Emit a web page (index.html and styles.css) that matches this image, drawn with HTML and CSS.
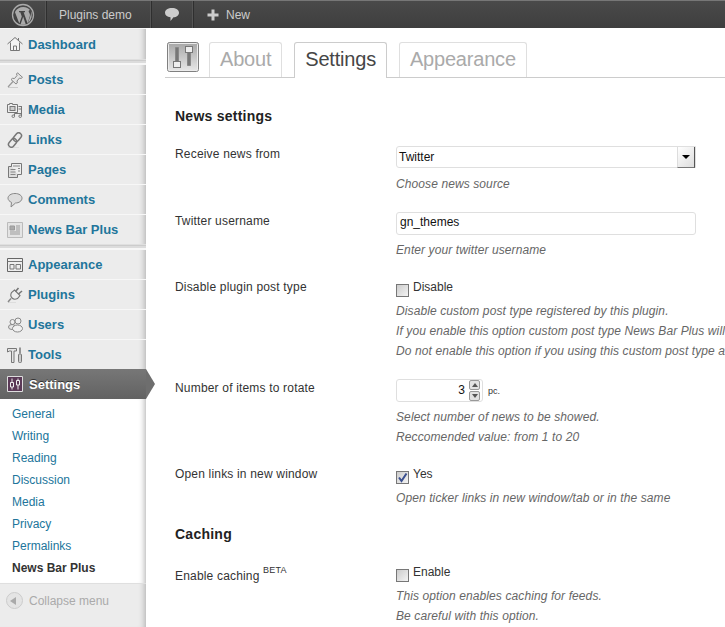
FILE: index.html
```html
<!DOCTYPE html>
<html lang="en">
<head>
  <meta charset="UTF-8">
  <title>News Bar Plus Settings</title>
  <link rel="stylesheet" href="styles.css">
</head>
<body>

  <div class="adminbar">
    <div class="bar-item bar-logo">
      <svg width="24" height="24" viewBox="0 0 24 24"><circle cx="12" cy="12" r="10.500" fill="none" stroke="#aaa" stroke-width="1.300"/><path d="M4 9.200 8.300 20.600 10.800 13.400 9.300 9.200H8V8h6v1.200h-1.400l4 11.400 2.200-7.300c.5-1.700-.2-3-1-4.300-.5-.9.200-2 1.200-2-1.700-2-4-3-6.800-3-3.400 0-6.200 1.600-7.800 4.200z" fill="#aaa"/><path d="M12.200 13.800 9.500 21.500c1.700.5 3.500.4 5.200-.2z" fill="#aaa"/><path d="M19.800 7.500c.5 2.300.2 4-.6 6l-2.300 6.500c3.400-2.200 5-7.800 2.900-12.500z" fill="#aaa"/></svg>
    </div>
    <div class="bar-item bar-site">Plugins demo</div>
    <div class="bar-item bar-comments">
      <svg width="16" height="15" viewBox="0 0 16 15"><path d="M8 1c4 0 7 1.900 7 4.700S12.500 10 9.500 10.300L6.500 14V10.200C3 9.900 1 8.300 1 5.700 1 2.900 4 1 8 1z" fill="#ccc"/></svg>
    </div>
    <div class="bar-item bar-new">
      <svg width="12" height="12" viewBox="0 0 12 12"><path d="M4.500 0.500h3v4h4v3h-4v4h-3v-4h-4v-3h4z" fill="#ccc"/></svg>
      <span>New</span>
    </div>
  </div>

  <div class="wrap">
    <div class="sidebar">
      <ul class="menu">
        <li class="menu-item first">
          <svg class="mi" viewBox="0 0 16 16"><path d="M3.500 7v7.500h9V7L8 2.500z" fill="#f4f4f4"/><path d="M.5 8 8 1.500 15.500 8M3.500 6.500v8h9v-8M6.500 14.500v-4.500h3v4.500M11.500 2v2.500" fill="none" stroke="#777"/></svg>
          <a>Dashboard</a>
        </li>
        <li class="menu-sep"></li>
        <li class="menu-item">
          <svg class="mi" viewBox="0 0 16 16"><path d="M1 15.500h10" stroke="#ccc"/><path d="M6 9.500 1 15" stroke="#999" stroke-width="1.200"/><path d="M10.500 .8 15.500 5.300 14 6.500 12.500 6 10 9 10.300 11 9 12 4 7.500 5.500 6.300 7.500 6.500 10 3.500 9.500 2z" fill="#e6e6e6" stroke="#888"/></svg>
          <a>Posts</a>
        </li>
        <li class="menu-item">
          <svg class="mi" viewBox="0 0 16 16"><path d="M.5 2.500h2v-1h3v1h5v8H.5z" fill="#eee" stroke="#777"/><rect x="3" y="4.500" width="5" height="4" fill="#ccc" stroke="#777"/><path d="M11.500 4.500h3.500M11.500 7h3.500M7.500 11.500v2.500M14.500 5v9M7.500 11.500h7" fill="none" stroke="#777"/><circle cx="6.300" cy="14.200" r="1.300" fill="none" stroke="#777"/><circle cx="13.200" cy="14.200" r="1.300" fill="none" stroke="#777"/></svg>
          <a>Media</a>
        </li>
        <li class="menu-item">
          <svg class="mi" viewBox="0 0 16 16"><path d="M1 15.500h11" stroke="#ddd"/><g transform="rotate(-50 8 8)" fill="none" stroke="#777" stroke-width="1.500"><rect x="-.5" y="5.200" width="9.500" height="5.600" rx="2.800"/><rect x="7" y="5.200" width="9.500" height="5.600" rx="2.800"/></g></svg>
          <a>Links</a>
        </li>
        <li class="menu-item">
          <svg class="mi" viewBox="0 0 16 16"><path d="M1.500 4.500h9v11h-9z" fill="#ddd" stroke="#777"/><path d="M4.500 4V1.500h10v11h-4" fill="#eee" stroke="#777"/><path d="M6 4h7M11 6.500h2M11 9h2M3.500 7.500h5M3.500 10h5M3.500 12.500h5" stroke="#888"/></svg>
          <a>Pages</a>
        </li>
        <li class="menu-item">
          <svg class="mi" viewBox="0 0 16 16"><path d="M8 1.500c4 0 7 2 7 4.700s-3 4.800-6.500 4.800L4 15l.5-4.600C2.500 9.500 1 8 1 6.200 1 3.500 4 1.500 8 1.500z" fill="#ddd" stroke="#888"/></svg>
          <a>Comments</a>
        </li>
        <li class="menu-item">
          <svg class="mi" viewBox="0 0 16 16"><path d="M.5.500h15v15H.5z" fill="#e4e4e4" stroke="#bbb"/><path d="M3 4h4.500v4H3zM9 4h4M9 6h4M9 8h4M3 10h10M3 12h10" fill="#aaa" stroke="#999"/></svg>
          <a>News Bar Plus</a>
        </li>
        <li class="menu-sep"></li>
        <li class="menu-item">
          <svg class="mi" viewBox="0 0 16 16"><path d="M.5 1.500h15v13H.5z" fill="#eee" stroke="#666"/><path d="M.5 4.500h15M3 7.500h4v4.500H3zM9 7.500h4.500v4.500H9z" fill="none" stroke="#777"/></svg>
          <a>Appearance</a>
        </li>
        <li class="menu-item">
          <svg class="mi" viewBox="0 0 16 16"><path d="M1 15.500h8" stroke="#ddd"/><path d="M4 11.500 1 15" stroke="#888" stroke-width="1.500"/><path d="M7.500 3 13 8.500 10.500 11.500C8.500 12.500 6.500 12.500 5 11 3.500 9.500 3.500 7.500 4.500 5.500z" fill="#eee" stroke="#777" stroke-width="1.100"/><path d="M8.500 4.500 11.500 1M11.500 7 15 4" fill="none" stroke="#777" stroke-width="1.600"/></svg>
          <a>Plugins</a>
        </li>
        <li class="menu-item">
          <svg class="mi" viewBox="0 0 16 16"><circle cx="5.500" cy="5" r="2.500" fill="#eee" stroke="#888"/><circle cx="11" cy="4" r="3" fill="#eee" stroke="#888"/><ellipse cx="5" cy="10" rx="3.500" ry="2.500" fill="#e6e6e6" stroke="#888"/><ellipse cx="10.500" cy="11.500" rx="5" ry="3.500" fill="#f0f0f0" stroke="#888"/></svg>
          <a>Users</a>
        </li>
        <li class="menu-item">
          <svg class="mi" viewBox="0 0 16 16"><path d="M.5 1.500h9v2.500H7v11.500H4.500V4H2.500L.5 5z" fill="#e4e4e4" stroke="#777"/><path d="M13 .5v6" stroke="#777" stroke-width="1.500"/><rect x="11.500" y="7" width="3" height="8.500" rx="1" fill="#ccc" stroke="#777"/></svg>
          <a>Tools</a>
        </li>
        <li class="menu-item current">
          <svg class="mi" viewBox="0 0 16 16"><path d="M.5.500h15v15H.5z" fill="#5b3a57" stroke="#ddd"/><path d="M5 2.500v4M5 11v2.500M11 2.500v2M11 9v4.500" stroke="#eee"/><path d="M3.500 6.500h3V11h-3zM9.500 4.500h3V9h-3z" fill="none" stroke="#eee"/></svg>
          <a>Settings</a>
        </li>
      </ul>
      <ul class="submenu">
        <li>General</li>
        <li>Writing</li>
        <li>Reading</li>
        <li>Discussion</li>
        <li>Media</li>
        <li>Privacy</li>
        <li>Permalinks</li>
        <li class="active">News Bar Plus</li>
      </ul>
      <div class="collapse">
        <span class="collapse-btn"><span class="collapse-arrow"></span></span>
        <span>Collapse menu</span>
      </div>
    </div>

    <div class="main">
      <div class="tabs">
        <div class="tabs-icon">
          <svg width="32" height="30" viewBox="0 0 32 30"><defs><linearGradient id="iconbg" x1="0" y1="0" x2="0" y2="1"><stop offset="0" stop-color="#a6a6a6"/><stop offset="1" stop-color="#e8e8e8"/></linearGradient></defs><rect x=".5" y=".5" width="31" height="29" rx="2" fill="url(#iconbg)" stroke="#808080"/><rect x="1.500" y="1.500" width="29" height="27" rx="1" fill="none" stroke="#ececec"/><path d="M8.500 5.500h3v14h-3zM20.500 10.500h3v13h-3z" fill="#777" stroke="#888"/><rect x="6.500" y="19.500" width="7" height="6" fill="#eee" stroke="#777"/><rect x="18.500" y="4.500" width="7" height="6" fill="#eee" stroke="#777"/></svg>
        </div>
        <a class="tab">About</a>
        <a class="tab tab-on">Settings</a>
        <a class="tab">Appearance</a>
      </div>

      <h3 class="section">News settings</h3>

      <div class="row row-select">
        <div class="lbl">Receive news from</div>
        <div class="field">
          <div class="select"><span>Twitter</span><span class="select-btn"></span></div>
          <p class="desc">Choose news source</p>
        </div>
      </div>

      <div class="row row-text">
        <div class="lbl">Twitter username</div>
        <div class="field">
          <div class="input">gn_themes</div>
          <p class="desc">Enter your twitter username</p>
        </div>
      </div>

      <div class="row row-check">
        <div class="lbl">Disable plugin post type</div>
        <div class="field">
          <div class="check-line"><span class="check"></span>Disable</div>
          <p class="desc">Disable custom post type registered by this plugin.</p>
          <p class="desc">If you enable this option custom post type News Bar Plus will be disabled</p>
          <p class="desc">Do not enable this option if you using this custom post type already</p>
        </div>
      </div>

      <div class="row row-number">
        <div class="lbl">Number of items to rotate</div>
        <div class="field">
          <div class="number-line">
            <div class="input number">
              <span>3</span>
              <div class="spin">
                <span class="spin-btn"><span class="up"></span></span>
                <span class="spin-btn"><span class="down"></span></span>
              </div>
            </div>
            <span class="unit">pc.</span>
          </div>
          <p class="desc">Select number of news to be showed.</p>
          <p class="desc">Reccomended value: from 1 to 20</p>
        </div>
      </div>

      <div class="row row-check">
        <div class="lbl">Open links in new window</div>
        <div class="field">
          <div class="check-line">
            <span class="check checked"><svg width="11" height="11" viewBox="0 0 11 11"><path d="M2 5.500 4.500 9 9.500 1.500" fill="none" stroke="#3a4f8f" stroke-width="2"/></svg></span>Yes
          </div>
          <p class="desc">Open ticker links in new window/tab or in the same</p>
        </div>
      </div>

      <h3 class="section section-2">Caching</h3>

      <div class="row row-check row-beta">
        <div class="lbl">Enable caching <sup>BETA</sup></div>
        <div class="field">
          <div class="check-line"><span class="check"></span>Enable</div>
          <p class="desc">This option enables caching for feeds.</p>
          <p class="desc">Be careful with this option.</p>
        </div>
      </div>
    </div>
  </div>

</body>
</html>
```

FILE: styles.css
```css
html, body {
  margin: 0;
  padding: 0;
  height: 627px;
  overflow: hidden;
  background-color: #fff;
}

body {
  font-family: "Liberation Sans", Arial, sans-serif;
  font-size: 12px;
  color: #333;
}

ul {
  list-style: none;
  margin: 0;
  padding: 0;
}

p {
  margin: 0;
}

/* top bar */
.adminbar {
  display: flex;
  height: 27px;
  border-top: 1px solid #777;
  background: linear-gradient(#4a4a4a, #3e3e3e);
  color: #ccc;
  font-size: 12px;
}

.bar-item {
  display: flex;
  align-items: center;
  border-right: 1px solid #555;
  box-shadow: 1px 0 0 #2f2f2f;
}

.bar-logo {
  width: 45px;
  justify-content: center;
}

.bar-site {
  width: 105px;
  padding-left: 13px;
  box-sizing: border-box;
}

.bar-comments {
  width: 41px;
  justify-content: center;
}

.bar-new {
  border: 0;
  box-shadow: none;
  padding-left: 14px;
  gap: 7px;
}

/* sidebar */
.wrap {
  display: flex;
  height: 599px;
}

.sidebar {
  width: 146px;
  flex: none;
  display: flex;
  flex-direction: column;
  background-color: #ececec;
  box-shadow: inset -7px 0 6px -6px #aaa;
}

.menu-item {
  display: flex;
  align-items: center;
  height: 29px;
  padding-left: 7px;
  gap: 5px;
  border-bottom: 1px solid #dfdfdf;
  border-top: 1px solid #f7f7f7;
  font-size: 13px;
  font-weight: bold;
  color: #21759b;
  margin-bottom: -1px;
}

.menu-item.first {
  height: 30px;
}

.mi {
  width: 16px;
  height: 16px;
  flex: none;
}

.menu-sep {
  margin-top: 1px;
  background-color: #dcdcdc;
  border-top: 1px solid #ccc;
  border-bottom: 1px solid #f7f7f7;
  box-sizing: border-box;
  height: 4px;
}

.menu-item.current {
  position: relative;
  height: 30px;
  gap: 6px;
  border: 0;
  margin: 0;
  color: #fff;
  background: linear-gradient(#777, #626262);
  text-shadow: 0 -1px 0 #333;
}

.menu-item.current::after {
  content: "";
  position: absolute;
  left: 146px;
  top: 0;
  border-left: 9px solid #6e6e6e;
  border-top: 15px solid transparent;
  border-bottom: 15px solid transparent;
}

.submenu {
  background-color: #fff;
  padding: 4px 6px 4px 12px;
  border-bottom: 1px solid #dfdfdf;
  box-shadow: inset -7px 0 6px -6px #aaa;
}

.submenu li {
  height: 22px;
  line-height: 22px;
  color: #21759b;
}

.submenu li.active {
  color: #333;
  font-weight: bold;
}

.collapse {
  display: flex;
  align-items: center;
  gap: 6px;
  padding: 8px 0 0 6px;
  color: #aaa;
}

.collapse-btn {
  display: flex;
  align-items: center;
  justify-content: center;
  width: 15px;
  height: 15px;
  border: 1px solid #ccc;
  border-radius: 50%;
  background-color: #e4e4e4;
}

.collapse-arrow {
  margin-left: -3px;
  border-right: 6px solid #aaa;
  border-top: 4px solid transparent;
  border-bottom: 4px solid transparent;
}

/* content */
.main {
  flex: 1;
  min-width: 0;
  overflow: hidden;
  padding: 14px 0 0 19px;
  white-space: nowrap;
}

.tabs {
  display: flex;
  align-items: flex-end;
  gap: 12px;
  height: 35px;
  padding-left: 2px;
  border-bottom: 1px solid #ccc;
}

.tabs-icon {
  align-self: flex-start;
  margin-right: -2px;
  height: 30px;
}

.tab {
  height: 34px;
  line-height: 33px;
  padding: 0 10px;
  font-size: 20px;
  letter-spacing: -.2px;
  color: #aaa;
  background-color: #fff;
  border: 1px solid #dfdfdf;
  border-bottom: 0;
  border-radius: 3px 3px 0 0;
}

.tab-on {
  color: #464646;
  height: 35px;
  margin-bottom: -1px;
  border-color: #ccc;
}

.section {
  margin: 29px 0 0 10px;
  font-size: 14px;
  line-height: 18px;
  letter-spacing: .25px;
  color: #222;
  height: 18px;
}

.section-2 {
  margin-top: 17px;
}

.row {
  display: flex;
  margin-left: 10px;
}

.lbl {
  width: 221px;
  flex: none;
  letter-spacing: .18px;
}

.desc {
  line-height: 20px;
  letter-spacing: .1px;
  font-style: italic;
  color: #666;
}

.row-select {
  margin-top: 21px;
}

.row-select .lbl {
  line-height: 16px;
}

.select {
  display: flex;
  justify-content: space-between;
  align-items: center;
  box-sizing: border-box;
  width: 300px;
  height: 22px;
  padding-left: 2px;
  border: 1px solid #dfdfdf;
  border-radius: 3px 0 0 3px;
  color: #111;
}

.select-btn {
  position: relative;
  width: 16px;
  height: 20px;
  border-left: 1px solid #ddd;
  border-right: 1px solid #555;
  border-bottom: 1px solid #777;
  background: linear-gradient(135deg, #fff, #ddd);
}

.select-btn::after {
  content: "";
  position: absolute;
  left: 4px;
  top: 8px;
  border-top: 4px solid #000;
  border-left: 4px solid transparent;
  border-right: 4px solid transparent;
}

.row-select .desc {
  margin-top: 6px;
}

.input {
  box-sizing: border-box;
  width: 300px;
  height: 23px;
  line-height: 19px;
  padding-left: 3px;
  border: 1px solid #dfdfdf;
  border-radius: 3px;
  color: #111;
}

.row-text {
  margin-top: 18px;
}

.row-text .lbl {
  margin-top: 2px;
}

.row-text .desc {
  margin-top: 5px;
}

.row-check {
  margin-top: 18px;
}

.row-check .lbl {
  line-height: 18px;
}

.check-line {
  display: flex;
  align-items: flex-start;
  height: 23px;
  line-height: 18px;
  gap: 4px;
}

.check {
  display: flex;
  align-items: center;
  justify-content: center;
  box-sizing: border-box;
  width: 13px;
  height: 13px;
  margin-top: 6px;
  border: 1px solid #777;
  background: linear-gradient(135deg, #ccc, #f4f4f4);
}

.row-beta {
  margin-top: 20px;
}

.row-beta .lbl {
  margin-top: 4px;
}

.row-number {
  margin-top: 18px;
}

.row-number .lbl {
  margin-top: 2px;
}

.number-line {
  display: flex;
  align-items: center;
  gap: 5px;
}

.input.number {
  display: flex;
  justify-content: flex-end;
  align-items: center;
  gap: 4px;
  width: 87px;
  padding-right: 2px;
}

.spin {
  display: flex;
  flex-direction: column;
}

.spin-btn {
  display: flex;
  align-items: center;
  justify-content: center;
  width: 9px;
  height: 8px;
  margin-bottom: 1px;
  border: 1px solid #999;
  border-radius: 2px;
  background-color: #e2e2e2;
}

.up {
  border-bottom: 4px solid #555;
  border-left: 3px solid transparent;
  border-right: 3px solid transparent;
}

.down {
  border-top: 4px solid #555;
  border-left: 3px solid transparent;
  border-right: 3px solid transparent;
}

.unit {
  font-size: 9px;
  color: #333;
}

.row-number .desc:first-of-type {
  margin-top: 5px;
}

sup {
  font-size: 9px;
  line-height: 0;
  vertical-align: 7px;
}
```
